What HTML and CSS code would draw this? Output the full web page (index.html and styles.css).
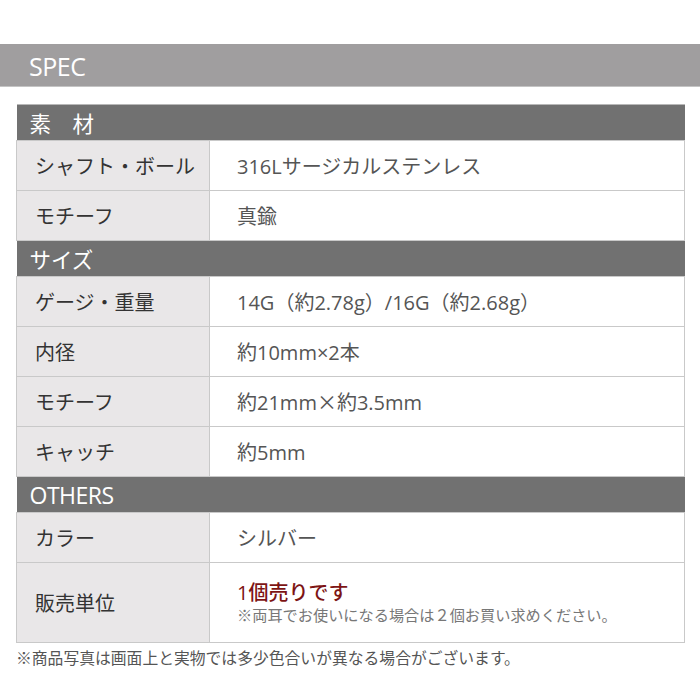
FILE: index.html
```html
<!DOCTYPE html>
<html lang="ja">
<head>
<meta charset="utf-8">
<link rel="stylesheet" href="styles.css">
</head>
<body>
<div class="page">
  <h1 class="spec-bar">SPEC</h1>
  <table class="spec-table">
    <colgroup><col class="col-label"><col></colgroup>
    <tr class="section"><th colspan="2">素　材</th></tr>
    <tr><th>シャフト・ボール</th><td>316Lサージカルステンレス</td></tr>
    <tr><th>モチーフ</th><td>真鍮</td></tr>
    <tr class="section"><th colspan="2">サイズ</th></tr>
    <tr><th>ゲージ・重量</th><td>14G（約2.78g）/16G（約2.68g）</td></tr>
    <tr><th>内径</th><td>約10mm×2本</td></tr>
    <tr><th>モチーフ</th><td>約21mm<span class="times">×</span>約3.5mm</td></tr>
    <tr><th>キャッチ</th><td>約5mm</td></tr>
    <tr class="section"><th colspan="2" class="latin">OTHERS</th></tr>
    <tr><th>カラー</th><td>シルバー</td></tr>
    <tr class="tall"><th>販売単位</th><td><div class="red">1個売りです</div><div class="note">※両耳でお使いになる場合は２個お買い求めください。</div></td></tr>
  </table>
  <p class="footnote">※商品写真は画面上と実物では多少色合いが異なる場合がございます。</p>
</div>
</body>
</html>
```
FILE: styles.css
```css
html, body {
  margin: 0;
  padding: 0;
  background: #fff;
}
body {
  font-family: "Open Sans", "Noto Sans CJK JP", sans-serif;
  color: #333;
}
.page {
  padding-top: 44px;
}
.spec-bar {
  margin: 0;
  height: 42px;
  border-bottom: 1px solid #c4c4c4;
  background: #a09e9f;
  color: #fff;
  font-weight: 400;
  font-size: 25px;
  letter-spacing: -0.5px;
  line-height: 44px;
  padding-left: 29px;
}
.spec-table {
  margin: 17px 0 0 16px;
  width: 669px;
  border-collapse: collapse;
  table-layout: fixed;
}
.col-label {
  width: 193px;
}
.spec-table th,
.spec-table td {
  border: 1px solid #c9c9c9;
  height: 49px;
  padding: 0;
  vertical-align: middle;
  text-align: left;
  font-size: 20px;
  font-weight: 400;
}
.spec-table th {
  background: #e9e7e8;
  color: #333;
  padding-left: 18px;
}
.spec-table td {
  color: #555;
  padding-left: 27px;
}
.times {
  font-family: "Noto Sans CJK JP", sans-serif;
}
.spec-table tr.section th {
  background: #717171;
  color: #fff;
  border: none;
  border-top: 1px solid #b8b8b8;
  height: 35px;
  padding-left: 13px;
  font-size: 21.5px;
}
.spec-table tr.section th.latin {
  font-size: 23px;
  letter-spacing: -0.5px;
}
.spec-table tr.tall th,
.spec-table tr.tall td {
  height: 79px;
}
.red {
  color: #7d1414;
  font-size: 20px;
  font-weight: 500;
  line-height: 25px;
}
.note {
  color: #777;
  font-size: 15.2px;
  line-height: 20px;
}
.footnote {
  margin: 5px 0 0 16px;
  font-size: 15.8px;
  color: #555;
  line-height: 20px;
}
```
